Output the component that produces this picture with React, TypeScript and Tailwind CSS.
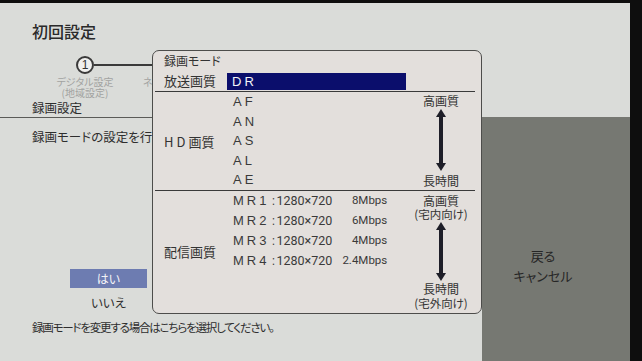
function Arrow() {
  return (
    <div className="flex-1 flex flex-col items-center">
      <svg width="10" height="8" viewBox="0 0 10 8" className="block shrink-0">
        <path d="M5 0 L10 8 L0 8 Z" fill="#1e1e28" />
      </svg>
      <div className="flex-1 w-[4px] bg-[#1e1e28]" />
      <svg width="10" height="8" viewBox="0 0 10 8" className="block shrink-0">
        <path d="M0 0 L10 0 L5 8 Z" fill="#1e1e28" />
      </svg>
    </div>
  );
}

const hdRows = ["AF", "AN", "AS", "AL", "AE"];
const mrRows = [
  { n: "MR1", r: "8Mbps" },
  { n: "MR2", r: "6Mbps" },
  { n: "MR3", r: "4Mbps" },
  { n: "MR4", r: "2.4Mbps" },
];

export default function App() {
  return (
    <div className="w-[642px] h-[361px] bg-[#0e0e0e] pt-[3px] pr-[12px] overflow-hidden font-['Noto_Sans_CJK_JP',sans-serif] text-[#2e2e2e] [font-feature-settings:'palt']">
      <div className="relative w-[630px] h-[358px] bg-[#dadcd9] flex flex-col">
        {/* title */}
        <div className="h-[44px] shrink-0 pl-[32px] pt-[18px] text-[16px] leading-[20px] font-medium text-[#2a2a2a]">
          初回設定
        </div>

        {/* steps */}
        <div className="h-[51px] shrink-0 flex flex-col">
          <div className="mt-[9px] h-[18px] flex items-center pl-[76px]">
            <div className="w-[18px] h-[18px] rounded-full border-2 border-[#3a3a3a] bg-[#f0f0ee] flex items-center justify-center text-[12px] leading-none font-['Liberation_Sans',sans-serif] text-[#333]">
              1
            </div>
            <div className="w-[68px] h-[2px] bg-[#3a3a3a]" />
            <div className="w-[18px] h-[18px] rounded-full border-2 border-[#3a3a3a] bg-[#f0f0ee]" />
            <div className="w-[68px] h-[2px] bg-[#3a3a3a]" />
            <div className="w-[20px] h-[20px] rounded-full border-2 border-[#3a3a3a] bg-[#f0f0ee]" />
          </div>
          <div className="mt-[2px] flex text-[10px] leading-[11px] text-[#a2a3a1]">
            <div className="ml-[30px] w-[110px] text-center">
              <div className="h-[11px]">デジタル設定</div>
              <div className="h-[11px]">(地域設定)</div>
            </div>
            <div className="ml-[3px] whitespace-nowrap">ネットワーク設定</div>
          </div>
        </div>

        {/* section label */}
        <div className="h-[19px] shrink-0 pl-[32px] text-[12.5px] leading-[19px]">録画設定</div>

        {/* main row */}
        <div className="flex-1 flex min-h-0">
          <div className="flex-1 border-t border-[#5a5b58] flex flex-col">
            <div className="pt-[11px] pl-[32px] text-[12.5px] leading-[16px] whitespace-nowrap">
              録画モードの設定を行います。
            </div>
            <div className="mt-[124px] ml-[70px] w-[77px] h-[19px] bg-[#6d7cb1] text-[#f4f4f8] text-[12px] leading-[19px] text-center">
              はい
            </div>
            <div className="mt-[5px] ml-[70px] w-[77px] h-[20px] text-[12.5px] leading-[20px] text-center">
              いいえ
            </div>
            <div className="mt-[6px] pl-[32px] text-[11.5px] leading-[16px] tracking-[-1.2px] whitespace-nowrap">
              録画モードを変更する場合はこちらを選択してください。
            </div>
          </div>
          <div className="w-[148px] bg-[#767872] flex flex-col items-center pt-[129px] pr-[26px] text-[13px] leading-[20px] text-[#262626]">
            <div>戻る</div>
            <div>キャンセル</div>
          </div>
        </div>

        {/* dialog */}
        <div className="absolute left-[152px] top-[47px] w-[330px] h-[264px] rounded-[7px] border border-[#4d4d4b] bg-[#e3dfdc] flex flex-col text-[#333]">
          <div className="h-[20px] shrink-0 pl-[11px] text-[12px] leading-[20px]">録画モード</div>
          <div className="h-[20px] shrink-0 flex items-center">
            <div className="w-[74px] pl-[11px] text-[13px] leading-[20px]">放送画質</div>
            <div className="w-[179px] h-[17px] bg-[#0b0e6c] pl-[5px] text-[13px] leading-[17px] text-[#f2f2f6] tracking-[3px] font-['Liberation_Sans',sans-serif]">
              DR
            </div>
          </div>
          <div className="h-px shrink-0 bg-[#3a3a3a] ml-[2px] mr-[6px]" />

          {/* HD section */}
          <div className="h-[98px] shrink-0 flex">
            <div className="w-[74px] pl-[11px] flex items-center text-[13px] pt-[2px]">
              <span className="tracking-[3px]">HD</span>画質
            </div>
            <div className="w-[184px] flex flex-col">
              {hdRows.map((r) => (
                <div
                  key={r}
                  className="flex-1 flex items-center pl-[6px] text-[13px] tracking-[3px] font-['Liberation_Sans',sans-serif] text-[#3a3a3a]"
                >
                  {r}
                </div>
              ))}
            </div>
            <div className="w-[60px] flex flex-col items-center text-[12px]">
              <div className="h-[17px] leading-[17px]">高画質</div>
              <Arrow />
              <div className="h-[19px] leading-[19px]">長時間</div>
            </div>
          </div>
          <div className="h-px shrink-0 bg-[#3a3a3a] ml-[2px] mr-[6px]" />

          {/* MR section */}
          <div className="flex-1 flex min-h-0">
            <div className="w-[74px] pl-[11px] flex items-center text-[13px]">配信画質</div>
            <div className="w-[184px] flex flex-col">
              {mrRows.map((m) => (
                <div key={m.n} className="h-[20px] flex items-center pl-[6px] text-[#3a3a3a]">
                  <span className="w-[39px] text-[13px] tracking-[3px] font-['Liberation_Sans',sans-serif]">
                    {m.n}
                  </span>
                  <span className="text-[12px] font-['Roboto',sans-serif] mr-[1.5px]">:</span>
                  <span className="text-[12.5px] font-['Roboto',sans-serif]">1280×720</span>
                  <span className="w-[55px] text-right text-[11.5px] font-['Roboto',sans-serif]">{m.r}</span>
                </div>
              ))}
            </div>
            <div className="w-[60px] flex flex-col items-center pt-[3px] pb-[3px] text-[12px] whitespace-nowrap">
              <div className="h-[14px] leading-[14px]">高画質</div>
              <div className="h-[13px] leading-[13px] text-[11.5px]">(宅内向け)</div>
              <div className="flex-1 flex flex-col pt-[1px] pb-[1px]">
                <Arrow />
              </div>
              <div className="h-[14px] leading-[14px]">長時間</div>
              <div className="h-[14px] leading-[14px] text-[11.5px]">(宅外向け)</div>
            </div>
          </div>
        </div>
      </div>
    </div>
  );
}
